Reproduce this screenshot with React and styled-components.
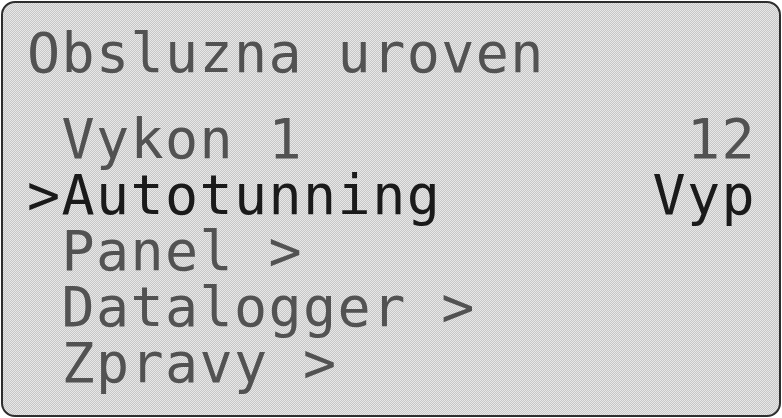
import React from "react";
import styled, { createGlobalStyle } from "styled-components";

const rows = [
  { label: "Vykon 1", value: "12" },
  { label: "Autotunning", value: "Vyp", selected: true },
  { label: "Panel >" },
  { label: "Datalogger >" },
  { label: "Zpravy >" },
];

export default function App() {
  return (
    <>
      <GlobalStyle />
      <Screen>
        <Title>Obsluzna uroven</Title>
        <Menu>
          {rows.map((row) => (
            <Row key={row.label} selected={row.selected}>
              <Label>
                {row.selected ? ">" : " "}
                {row.label}
              </Label>
              {row.value && <Value>{row.value}</Value>}
            </Row>
          ))}
        </Menu>
      </Screen>
    </>
  );
}

const GlobalStyle = createGlobalStyle`
  html, body {
    margin: 0;
    padding: 0;
    background: #ffffff;
  }
`;

const Screen = styled.div`
  box-sizing: border-box;
  width: 780px;
  height: 416px;
  margin: 1px;
  border: 2px solid #2e2e2e;
  border-radius: 14px;
  padding: 22px 24px 0 24px;
  background: repeating-conic-gradient(#c6c6c6 0 25%, #e8e8e8 0 50%) 0 0 / 2px 2px;
  font-family: "DejaVu Sans Mono", "Liberation Mono", monospace;
  font-size: 55px;
  letter-spacing: 1.4px;
  line-height: 56px;
  color: #525252;
  white-space: pre;
`;

const Title = styled.div`
  height: 56px;
`;

const Menu = styled.div`
  display: flex;
  flex-direction: column;
  margin-top: 30px;
`;

const Row = styled.div`
  display: flex;
  justify-content: space-between;
  height: 56px;
  color: ${(p) => (p.selected ? "#1a1a1a" : "#525252")};
`;

const Label = styled.span`
  display: block;
`;

const Value = styled.span`
  margin-right: -1px;
`;
